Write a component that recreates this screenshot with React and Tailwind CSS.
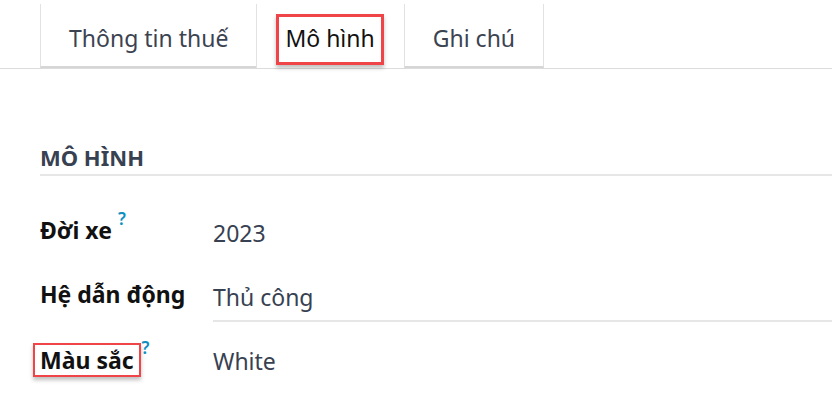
import React from 'react';

const tabs = [
    { label: 'Thông tin thuế', active: false },
    { label: 'Mô hình', active: true },
    { label: 'Ghi chú', active: false },
];

const rows = [
    { label: 'Đời xe', help: true, value: '2023' },
    { label: 'Hệ dẫn động', help: false, value: 'Thủ công', underline: true },
    { label: 'Màu sắc', help: true, value: 'White', boxed: true },
];

export default function App() {
    return (
        <div className="w-[832px] h-[404px] overflow-hidden bg-white" style={{ fontFamily: '"Noto Sans", "Open Sans", sans-serif' }}>
            <div className="flex pl-[40px] pt-[4px] border-b border-[#dcdcdc] h-[69px]">
                {tabs.map((t) => (
                    <div
                        key={t.label}
                        className={
                            t.active
                                ? 'h-[64px] pl-[19px] pr-[20px] pt-[10px] flex items-start border-x border-[#e2e2e2] -ml-px'
                                : 'h-[64px] px-[28px] pt-[16px] flex items-start border-x border-b-2 border-[#e2e2e2] border-b-[#d6d6d6] -ml-px first:ml-0'
                        }
                    >
                        {t.active ? (
                            <span className="border-[3px] border-[#f04548] px-[6px] pt-[3px] pb-[6px] text-[23px] text-[#111] leading-[36px] shadow-[0_3px_4px_rgba(0,0,0,0.25)]">
                                {t.label}
                            </span>
                        ) : (
                            <span className="text-[23px] text-[#3b4351] leading-[36px]">{t.label}</span>
                        )}
                    </div>
                ))}
            </div>

            <div className="pl-[40px] pt-[73px]">
                <div className="border-b-2 border-[#e6e6e6] pb-[2px]">
                    <h2 className="text-[22px] font-bold text-[#374151] leading-[30px] uppercase">Mô hình</h2>
                </div>

                <div className="pt-[39px] flex flex-col gap-[21px]">
                    {rows.map((r) => (
                        <div key={r.label} className="flex items-start h-[43px]">
                            <div className="w-[173px] flex items-start">
                                <span
                                    className={
                                        r.boxed
                                            ? 'text-[23px] font-bold text-[#111] leading-[30px] -ml-[7px] px-[5px] border-[2px] border-[#f04548] shadow-[0_3px_4px_rgba(0,0,0,0.25)]'
                                            : 'text-[23px] font-bold text-[#111] leading-[30px]'
                                    }
                                >
                                    {r.label}
                                </span>
                                {r.help && (
                                    <sup className={r.boxed ? 'text-[17px] font-semibold text-[#0d8fbf] leading-none mt-[4px] ml-[1px]' : 'text-[17px] font-semibold text-[#0d8fbf] leading-none mt-[3px] ml-[6px]'}>?</sup>
                                )}
                            </div>
                            <div className={r.underline ? 'flex-1 border-b-2 border-[#e6e6e6] h-[43px]' : 'flex-1'}>
                                <span className="text-[23px] text-[#374151] leading-[36px]">{r.value}</span>
                            </div>
                        </div>
                    ))}
                </div>
            </div>
        </div>
    );
}
